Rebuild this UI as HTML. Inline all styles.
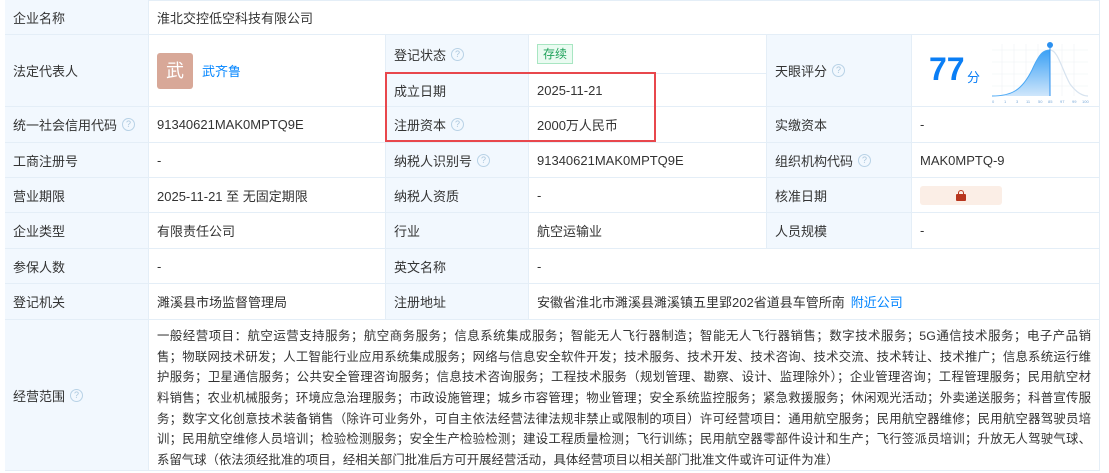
<!DOCTYPE html>
<html><head><meta charset="utf-8"><style>
body{margin:0;width:1109px;height:473px;background:#fff;overflow:hidden;font-family:"Liberation Sans","Noto Sans CJK SC",sans-serif;font-size:13px;color:#333}
.c{position:absolute;box-sizing:border-box;border-right:1px solid #e4eef7;border-bottom:1px solid #e4eef7;padding:0 8px;display:flex;align-items:center;white-space:nowrap}
.l{background:#f2f8fe}
.q{display:inline-block;width:11px;height:11px;border:1px solid #b8d2e6;border-radius:50%;color:#a9c6dc;font-size:9px;line-height:11px;text-align:center;margin-left:5px;vertical-align:middle}
.a{color:#0084ff}
.sc div{text-align:justify;text-align-last:justify;height:20.7px;line-height:20.7px;white-space:nowrap;font-size:12.4px;overflow:hidden}
</style></head><body>
<div style="position:absolute;left:5px;top:0;width:1095px;height:471px;border-left:1px solid #e4eef7;border-top:1px solid #e4eef7;box-sizing:border-box"></div>
<div class="c l" style="left:5px;top:0;width:144px;height:35px">企业名称</div>
<div class="c" style="left:149px;top:0;width:951px;height:35px">淮北交控低空科技有限公司</div>
<div class="c l" style="left:5px;top:35px;width:144px;height:72px">法定代表人</div>
<div class="c" style="left:149px;top:35px;width:237px;height:72px"><span style="display:inline-block;width:36px;height:36px;background:#d8a898;border-radius:3px;color:#fff;font-size:18px;line-height:36px;text-align:center">武</span><span class="a" style="margin-left:9px">武齐鲁</span></div>
<div class="c l" style="left:386px;top:35px;width:143px;height:39px">登记状态<span class="q">?</span></div>
<div class="c" style="left:529px;top:35px;width:238px;height:39px"><span style="border:1px solid #a8e6c2;background:#eafbf1;color:#21a35c;padding:0 5px;line-height:18px;font-size:12px">存续</span></div>
<div class="c l" style="left:386px;top:74px;width:143px;height:33px">成立日期</div>
<div class="c" style="left:529px;top:74px;width:238px;height:33px">2025-11-21</div>
<div class="c l" style="left:767px;top:35px;width:145px;height:72px">天眼评分<span class="q">?</span></div>
<div class="c" style="left:912px;top:35px;width:188px;height:72px;padding:0">
<span style="position:absolute;left:17px;top:16px;color:#0a7ef5;font-weight:bold;font-size:32px">77</span>
<span style="position:absolute;left:55px;top:32px;color:#0a7ef5;font-size:13px">分</span>
<svg style="position:absolute;left:80px;top:5px" width="100" height="66" viewBox="0 0 100 66">
<g stroke="#eef2f6" stroke-width="0.6"><path d="M0 10H96M0 22H96M0 34H96M0 46H96M10 4V56M22 4V56M34 4V56M46 4V56M58 4V56M70 4V56M82 4V56"/></g>
<defs><linearGradient id="g" x1="0" y1="0" x2="0" y2="1"><stop offset="0" stop-color="#3aa0f5"/><stop offset="1" stop-color="#cfe6fb"/></linearGradient></defs>
<path d="M0 56C20 56 30 50 40 30C48 12 52 10 58 10V56Z" fill="url(#g)"/>
<path d="M0 56C20 56 30 50 40 30C48 12 52 10 58 10" fill="none" stroke="#4aa8f5" stroke-width="1"/>
<path d="M58 10C66 10 70 30 78 44C84 52 90 56 96 56" fill="none" stroke="#d7e3ef" stroke-width="1.2"/>
<line x1="58" y1="6" x2="58" y2="56" stroke="#2b90f0" stroke-width="1"/><circle cx="58" cy="5" r="3" fill="#2b90f0"/>
<text y="63" font-size="4" fill="#7aa9d8" font-family="Liberation Sans"><tspan x="0">0</tspan><tspan x="12">1</tspan><tspan x="24">3</tspan><tspan x="34">11</tspan><tspan x="46">50</tspan><tspan x="56">85</tspan><tspan x="68">97</tspan><tspan x="80">99</tspan><tspan x="90">100</tspan></text>
</svg></div>
<div class="c l" style="left:5px;top:107px;width:144px;height:36px">统一社会信用代码<span class="q">?</span></div>
<div class="c" style="left:149px;top:107px;width:237px;height:36px">91340621MAK0MPTQ9E</div>
<div class="c l" style="left:386px;top:107px;width:143px;height:36px">注册资本<span class="q">?</span></div>
<div class="c" style="left:529px;top:107px;width:238px;height:36px">2000万人民币</div>
<div class="c l" style="left:767px;top:107px;width:145px;height:36px">实缴资本</div>
<div class="c" style="left:912px;top:107px;width:188px;height:36px">-</div>
<div class="c l" style="left:5px;top:143px;width:144px;height:35px">工商注册号</div>
<div class="c" style="left:149px;top:143px;width:237px;height:35px">-</div>
<div class="c l" style="left:386px;top:143px;width:143px;height:35px">纳税人识别号<span class="q">?</span></div>
<div class="c" style="left:529px;top:143px;width:238px;height:35px">91340621MAK0MPTQ9E</div>
<div class="c l" style="left:767px;top:143px;width:145px;height:35px">组织机构代码<span class="q">?</span></div>
<div class="c" style="left:912px;top:143px;width:188px;height:35px">MAK0MPTQ-9</div>
<div class="c l" style="left:5px;top:178px;width:144px;height:35px">营业期限</div>
<div class="c" style="left:149px;top:178px;width:237px;height:35px">2025-11-21 至 无固定期限</div>
<div class="c l" style="left:386px;top:178px;width:143px;height:35px">纳税人资质</div>
<div class="c" style="left:529px;top:178px;width:238px;height:35px">-</div>
<div class="c l" style="left:767px;top:178px;width:145px;height:35px">核准日期</div>
<div class="c" style="left:912px;top:178px;width:188px;height:35px"><span style="display:inline-block;width:82px;height:19px;background:#fbeee6;border-radius:3px;position:relative"><span style="position:absolute;left:36px;top:8px;width:10px;height:7px;background:#b8361e;border-radius:1px"></span><span style="position:absolute;left:38px;top:4px;width:4px;height:4px;border:1px solid #b8361e;border-bottom:none;border-radius:3px 3px 0 0"></span></span></div>
<div class="c l" style="left:5px;top:213px;width:144px;height:36px">企业类型</div>
<div class="c" style="left:149px;top:213px;width:237px;height:36px">有限责任公司</div>
<div class="c l" style="left:386px;top:213px;width:143px;height:36px">行业</div>
<div class="c" style="left:529px;top:213px;width:238px;height:36px">航空运输业</div>
<div class="c l" style="left:767px;top:213px;width:145px;height:36px">人员规模</div>
<div class="c" style="left:912px;top:213px;width:188px;height:36px">-</div>
<div class="c l" style="left:5px;top:249px;width:144px;height:35px">参保人数</div>
<div class="c" style="left:149px;top:249px;width:237px;height:35px">-</div>
<div class="c l" style="left:386px;top:249px;width:143px;height:35px">英文名称</div>
<div class="c" style="left:529px;top:249px;width:571px;height:35px">-</div>
<div class="c l" style="left:5px;top:284px;width:144px;height:36px">登记机关</div>
<div class="c" style="left:149px;top:284px;width:237px;height:36px">濉溪县市场监督管理局</div>
<div class="c l" style="left:386px;top:284px;width:143px;height:36px">注册地址</div>
<div class="c" style="left:529px;top:284px;width:571px;height:36px">安徽省淮北市濉溪县濉溪镇五里郢202省道县车管所南<span class="a" style="margin-left:6px">附近公司</span></div>
<div class="c l" style="left:5px;top:320px;width:144px;height:151px">经营范围<span class="q">?</span></div>
<div class="c sc" style="left:149px;top:320px;width:951px;height:151px;display:block;padding:6px 8px 0 8px">
<div>一般经营项目：航空运营支持服务；航空商务服务；信息系统集成服务；智能无人飞行器制造；智能无人飞行器销售；数字技术服务；5G通信技术服务；电子产品销</div>
<div>售；物联网技术研发；人工智能行业应用系统集成服务；网络与信息安全软件开发；技术服务、技术开发、技术咨询、技术交流、技术转让、技术推广；信息系统运行维</div>
<div>护服务；卫星通信服务；公共安全管理咨询服务；信息技术咨询服务；工程技术服务（规划管理、勘察、设计、监理除外）；企业管理咨询；工程管理服务；民用航空材</div>
<div>料销售；农业机械服务；环境应急治理服务；市政设施管理；城乡市容管理；物业管理；安全系统监控服务；紧急救援服务；休闲观光活动；外卖递送服务；科普宣传服</div>
<div>务；数字文化创意技术装备销售（除许可业务外，可自主依法经营法律法规非禁止或限制的项目）许可经营项目：通用航空服务；民用航空器维修；民用航空器驾驶员培</div>
<div>训；民用航空维修人员培训；检验检测服务；安全生产检验检测；建设工程质量检测；飞行训练；民用航空器零部件设计和生产；飞行签派员培训；升放无人驾驶气球、</div>
<div style="text-align-last:left">系留气球（依法须经批准的项目，经相关部门批准后方可开展经营活动，具体经营项目以相关部门批准文件或许可证件为准）</div>
</div>
<div style="position:absolute;left:385px;top:72px;width:271px;height:70px;border:2px solid #e8474c;box-sizing:border-box"></div>
</body></html>
